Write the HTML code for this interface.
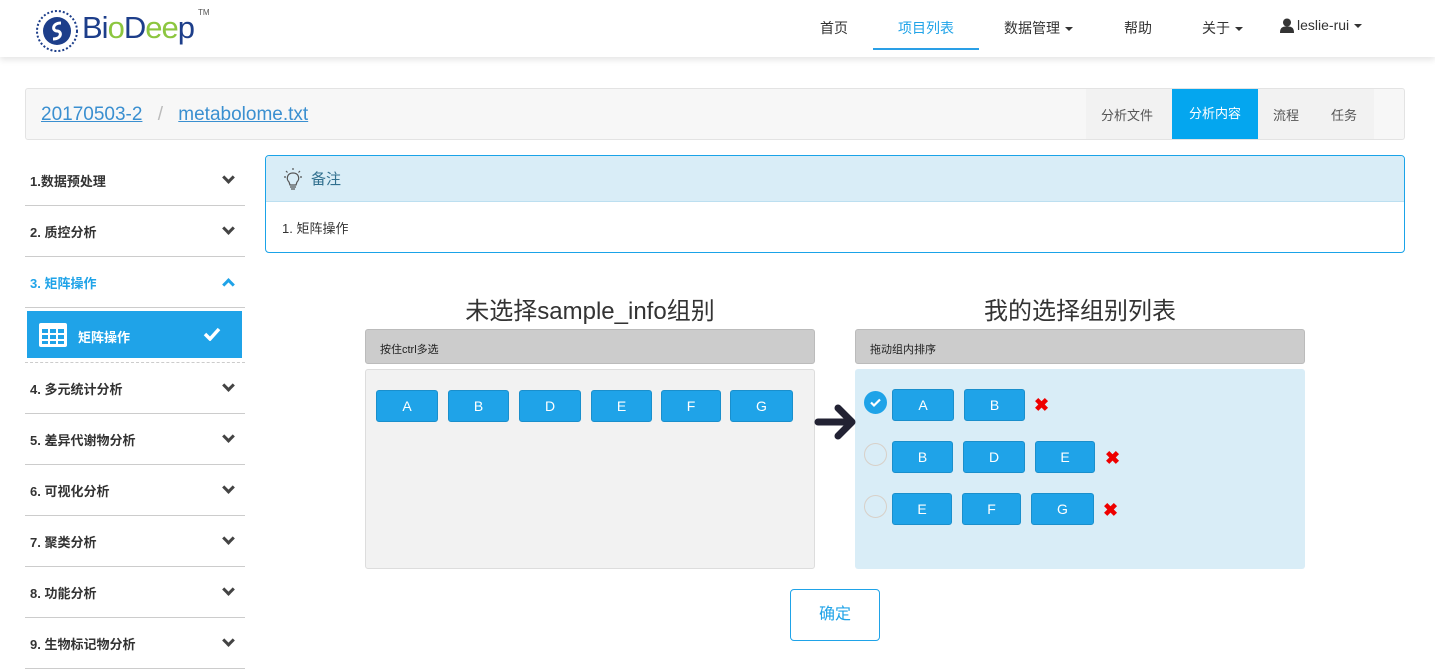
<!DOCTYPE html>
<html><head><meta charset="utf-8"><style>
*{box-sizing:border-box;margin:0;padding:0}
body{width:1435px;height:659px;overflow:hidden;background:#fff;font-family:"Liberation Sans","Noto Sans CJK SC",sans-serif;color:#333;position:relative}
.a{position:absolute}
.nav{left:0;top:0;width:1435px;height:57px;background:#fff;box-shadow:0 3px 6px rgba(0,0,0,.1)}
.ni{position:absolute;top:18px;font-size:14px;color:#333}
.car{display:inline-block;border-left:4px solid transparent;border-right:4px solid transparent;border-top:4px solid #333;vertical-align:middle;margin-left:5px}
.si{position:absolute;left:25px;width:220px;height:51px;border-bottom:1px solid #ccc;font-size:13px;font-weight:bold;color:#333;padding:16px 0 0 5px}
.chev{position:absolute;right:12px;top:18px;width:9px;height:9px;border-right:3px solid #444;border-bottom:3px solid #444;transform:rotate(45deg)}
.btn{position:absolute;height:32px;background:#1fa3e8;border:1px solid #1a8fcc;border-radius:3px;color:#fff;font-size:14px;text-align:center;line-height:30px}
.x{position:absolute;color:#e00;font-size:18px;font-weight:bold}
.rad{position:absolute;left:864px;width:23px;height:23px;border-radius:50%;border:1px solid #d8d0c8;background:#d9edf7}
</style></head><body>
<div class="a nav">
 <svg class="a" style="left:36px;top:10px" width="42" height="42" viewBox="0 0 42 42"><circle cx="21" cy="21" r="20" fill="none" stroke="#1d3e8a" stroke-width="2" stroke-dasharray="2 2"/><circle cx="21" cy="21" r="14" fill="#1d3e8a"/><path d="M25 13 C16 13 16 21 21 21 C26 21 26 29 17 29" stroke="#fff" stroke-width="3" fill="none"/></svg>
 <div class="a" style="left:82px;top:10px;font-size:31px;color:#1d3e8a;letter-spacing:-1px">Bi<span style="color:#8cc63f">o</span>D<span style="color:#8cc63f">ee</span>p</div>
 <div class="a" style="left:198px;top:8px;font-size:8px;color:#555">TM</div>
 <div class="ni" style="left:820px">首页</div>
 <div class="ni" style="left:898px;color:#1fa3e8">项目列表</div>
 <div class="a" style="left:873px;top:48px;width:106px;height:2px;background:#2a9fe6"></div>
 <div class="ni" style="left:1004px">数据管理<span class="car"></span></div>
 <div class="ni" style="left:1124px">帮助</div>
 <div class="ni" style="left:1202px">关于<span class="car"></span></div>
 <svg class="a" style="left:1280px;top:18px" width="14" height="15" viewBox="0 0 14 15"><circle cx="7" cy="4.5" r="4" fill="#333"/><path d="M0 15 C0 9 3 8.5 7 8.5 C11 8.5 14 9 14 15 Z" fill="#333"/></svg>
 <div class="ni" style="left:1297px;top:17px">leslie-rui<span class="car"></span></div>
</div>
<div class="a" style="left:25px;top:88px;width:1380px;height:52px;background:#f7f7f7;border:1px solid #e3e3e3;border-radius:3px">
 <div class="a" style="left:15px;top:15px;font-size:19px;color:#3a8fd0"><u>20170503-2</u> <span style="color:#bbb;margin:0 10px">/</span> <u>metabolome.txt</u></div>
 <div class="a" style="left:1060px;top:0;width:288px;height:50px;background:#f2f2f2"></div>
 <div class="a" style="left:1075px;top:16px;font-size:13px;color:#555">分析文件</div>
 <div class="a" style="left:1146px;top:0;width:86px;height:50px;background:#04a6ef;color:#fff;font-size:13px;text-align:center;line-height:50px">分析内容</div>
 <div class="a" style="left:1247px;top:16px;font-size:13px;color:#555">流程</div>
 <div class="a" style="left:1305px;top:16px;font-size:13px;color:#555">任务</div>
</div>
<div class="si" style="top:155px">1.数据预处理<i class="chev"></i></div>
<div class="si" style="top:206px">2. 质控分析<i class="chev"></i></div>
<div class="si" style="top:257px;color:#1fa3e8">3. 矩阵操作<i class="chev" style="transform:rotate(225deg);top:23px;border-color:#1fa3e8"></i></div>
<div class="a" style="left:25px;top:308px;width:220px;height:55px;border-bottom:1px dashed #ccc"></div>
<div class="a" style="left:27px;top:311px;width:215px;height:47px;background:#1fa3e8;color:#fff;font-size:13px;font-weight:bold">
 <svg class="a" style="left:12px;top:12px" width="28" height="24" viewBox="0 0 28 24"><rect x="0" y="0" width="28" height="24" rx="2" fill="#fff"/><g fill="#1fa3e8"><rect x="3" y="6" width="6" height="4"/><rect x="11" y="6" width="6" height="4"/><rect x="19" y="6" width="6" height="4"/><rect x="3" y="12" width="6" height="4"/><rect x="11" y="12" width="6" height="4"/><rect x="19" y="12" width="6" height="4"/><rect x="3" y="18" width="6" height="3"/><rect x="11" y="18" width="6" height="3"/><rect x="19" y="18" width="6" height="3"/></g></svg>
 <span class="a" style="left:51px;top:16px">矩阵操作</span>
 <svg class="a" style="left:176px;top:16px" width="18" height="14" viewBox="0 0 18 14"><path d="M2 7 L7 12 L16 2" stroke="#fff" stroke-width="3.5" fill="none"/></svg>
</div>
<div class="si" style="top:363px">4. 多元统计分析<i class="chev"></i></div>
<div class="si" style="top:414px">5. 差异代谢物分析<i class="chev"></i></div>
<div class="si" style="top:465px">6. 可视化分析<i class="chev"></i></div>
<div class="si" style="top:516px">7. 聚类分析<i class="chev"></i></div>
<div class="si" style="top:567px">8. 功能分析<i class="chev"></i></div>
<div class="si" style="top:618px">9. 生物标记物分析<i class="chev"></i></div>
<div class="a" style="left:265px;top:155px;width:1140px;height:98px;border:1px solid #1aa3e8;border-radius:4px;overflow:hidden">
 <div style="height:46px;background:#d9edf7;border-bottom:1px solid #bcdff0;font-size:15px;color:#31708f;padding:12px 0 0 45px;position:relative">
 <svg class="a" style="left:15px;top:11px" width="24" height="24" viewBox="0 0 24 24" fill="none" stroke="#555" stroke-width="1.2"><path d="M8 15 C5 12 6 6 12 6 C18 6 19 12 16 15 L15 18 H9 Z"/><path d="M9 20 H15 M10 22 H14 M12 1 V3 M3 10 H5 M19 10 H21 M5 4 L6.5 5.5 M19 4 L17.5 5.5"/></svg>备注</div>
 <div style="padding:16px 0 0 16px;font-size:13px;color:#333">1. 矩阵操作</div>
</div>
<div class="a" style="left:340px;top:291px;width:500px;text-align:center;font-size:24px;color:#333">未选择sample_info组别</div>
<div class="a" style="left:830px;top:291px;width:500px;text-align:center;font-size:24px;color:#333">我的选择组别列表</div>
<div class="a" style="left:365px;top:329px;width:450px;height:35px;background:#ccc;border:1px solid #bbb;border-radius:3px;font-size:11px;padding:11px 0 0 14px;color:#222">按住ctrl多选</div>
<div class="a" style="left:855px;top:329px;width:450px;height:35px;background:#ccc;border:1px solid #bbb;border-radius:3px;font-size:11px;padding:11px 0 0 14px;color:#222">拖动组内排序</div>
<div class="a" style="left:365px;top:369px;width:450px;height:200px;background:#f2f2f2;border:1px solid #ddd;border-radius:3px"></div>
<div class="a" style="left:855px;top:369px;width:450px;height:200px;background:#d9edf7;border-radius:3px"></div>
<div class="btn" style="left:376px;top:390px;width:62px">A</div>
<div class="btn" style="left:448px;top:390px;width:61px">B</div>
<div class="btn" style="left:519px;top:390px;width:62px">D</div>
<div class="btn" style="left:591px;top:390px;width:61px">E</div>
<div class="btn" style="left:661px;top:390px;width:60px">F</div>
<div class="btn" style="left:730px;top:390px;width:63px">G</div>
<svg class="a" style="left:814px;top:402px" width="44" height="40" viewBox="0 0 44 40"><path d="M4 20 H38 M24 6 L38 20 L24 34" stroke="#222233" stroke-width="7" stroke-linecap="round" stroke-linejoin="round" fill="none"/></svg>
<div class="rad" style="top:391px;background:#1fa3e8;border-color:#1fa3e8"><svg width="21" height="21" viewBox="0 0 21 21"><path d="M6 10.5 L9 13.5 L15 7.5" stroke="#fff" stroke-width="2.2" fill="none"/></svg></div>
<div class="rad" style="top:443px"></div>
<div class="rad" style="top:495px"></div>
<div class="btn" style="left:892px;top:389px;width:62px">A</div>
<div class="btn" style="left:964px;top:389px;width:61px">B</div>
<div class="x" style="left:1034px;top:395px">✖</div>
<div class="btn" style="left:892px;top:441px;width:61px">B</div>
<div class="btn" style="left:963px;top:441px;width:62px">D</div>
<div class="btn" style="left:1035px;top:441px;width:60px">E</div>
<div class="x" style="left:1105px;top:448px">✖</div>
<div class="btn" style="left:892px;top:493px;width:60px">E</div>
<div class="btn" style="left:962px;top:493px;width:59px">F</div>
<div class="btn" style="left:1031px;top:493px;width:63px">G</div>
<div class="x" style="left:1103px;top:500px">✖</div>
<div class="a" style="left:790px;top:589px;width:90px;height:52px;border:1px solid #1fa3e8;border-radius:4px;color:#1fa3e8;font-size:16px;text-align:center;line-height:50px">确定</div>
</body></html>
